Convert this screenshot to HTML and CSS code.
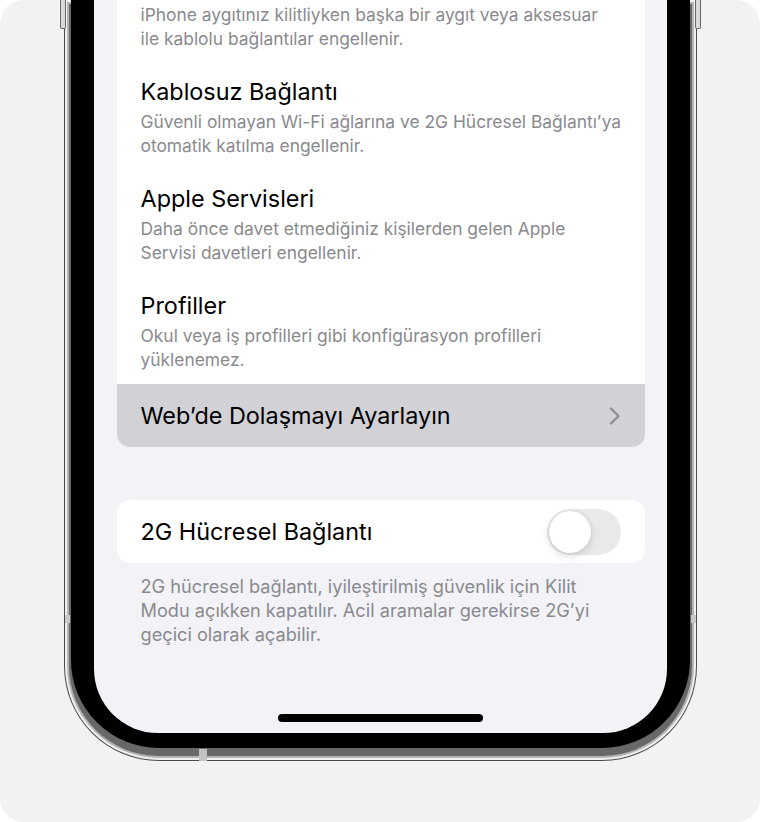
FILE: index.html
```html
<!DOCTYPE html>
<html lang="tr">
<head>
<meta charset="utf-8">
<title>Kilit Modu</title>
<link rel="stylesheet" href="styles.css">
</head>
<body>
<div class="stage">
  <div class="bezel">
    <span class="btn btn-left"></span>
    <span class="btn btn-right"></span>
    <span class="band band-left"></span>
    <span class="band band-right"></span>
    <span class="band-bottom"></span>
    <div class="screen">
      <div class="group">
        <div class="item">
          <div class="desc">iPhone aygıtınız kilitliyken başka bir aygıt veya aksesuar<br>ile kablolu bağlantılar engellenir.</div>
        </div>
        <div class="item">
          <div class="title">Kablosuz Bağlantı</div>
          <div class="desc">Güvenli olmayan Wi-Fi ağlarına ve 2G Hücresel Bağlantı’ya<br>otomatik katılma engellenir.</div>
        </div>
        <div class="item">
          <div class="title">Apple Servisleri</div>
          <div class="desc">Daha önce davet etmediğiniz kişilerden gelen Apple<br>Servisi davetleri engellenir.</div>
        </div>
        <div class="item item-last">
          <div class="title">Profiller</div>
          <div class="desc">Okul veya iş profilleri gibi konfigürasyon profilleri<br>yüklenemez.</div>
        </div>
        <div class="row row-active">
          <span class="title">Web’de Dolaşmayı Ayarlayın</span>
          <svg class="chevron" width="12" height="18" viewBox="0 0 12 18" aria-hidden="true">
            <path d="M2 1.5 L9.5 9 L2 16.5" fill="none" stroke="#8e8e93" stroke-width="2.4" stroke-linecap="round" stroke-linejoin="round"/>
          </svg>
        </div>
      </div>

      <div class="group group-single">
        <div class="row">
          <span class="title">2G Hücresel Bağlantı</span>
          <span class="toggle"><span class="knob"></span></span>
        </div>
      </div>

      <div class="footer">2G hücresel bağlantı, iyileştirilmiş güvenlik için Kilit<br>Modu açıkken kapatılır. Acil aramalar gerekirse 2G’yi<br>geçici olarak açabilir.</div>

      <div class="home"></div>
    </div>
  </div>
</div>
</body>
</html>
```

FILE: styles.css
```css
html, body {
  margin: 0;
  padding: 0;
  background: #ffffff;
}

.stage {
  width: 760px;
  height: 822px;
  background: #f2f2f2;
  border-radius: 24px;
  overflow: hidden;
  display: flex;
  flex-direction: column;
  align-items: center;
  font-family: Inter, "Noto Sans", "Liberation Sans", sans-serif;
  -webkit-font-smoothing: antialiased;
}

.bezel {
  position: relative;
  width: 619px;
  box-sizing: border-box;
  background: #000;
  padding: 0 23px 15px 23px;
  border-radius: 0 0 88px 88px;
  box-shadow:
    0 6px 0 2px #68686a,
    0 6px 0 4px #b4b4b6,
    0 6px 0 6px #f1f1f1,
    0 6px 0 7px #4a4a4a;
}

.btn {
  position: absolute;
  top: 0;
  width: 4px;
  height: 28px;
  background: #d9d9d9;
  border: 1px solid #6a6a6a;
  border-top: none;
  border-radius: 0 0 2px 2px;
}
.btn-left { left: -11px; }
.btn-right { right: -11px; }

.band {
  position: absolute;
  top: 615px;
  width: 5px;
  height: 8px;
  background: #c9c9cb;
}
.band-left { left: -6px; }
.band-right { right: -6px; }

.band-bottom {
  position: absolute;
  left: 128px;
  bottom: -13px;
  width: 8px;
  height: 12px;
  background: #c3c3c5;
}

.screen {
  height: 733px;
  box-sizing: border-box;
  background: #f2f2f7;
  border-radius: 0 0 64px 64px;
  padding: 0 22px 0 23px;
  display: flex;
  flex-direction: column;
  overflow: hidden;
}

.group {
  background: #ffffff;
  border-radius: 0 0 13px 13px;
  overflow: hidden;
}

.group-single {
  margin-top: 53px;
  border-radius: 13px;
}

.item {
  padding: 0 24px;
  margin-bottom: 26px;
}
.item-last {
  margin-bottom: 12px;
}

.title {
  font-size: 23.4px;
  line-height: 30px;
  color: #000;
  white-space: nowrap;
}

.desc {
  font-size: 17.4px;
  line-height: 24px;
  color: #8a8a8e;
  margin-top: 3px;
  white-space: nowrap;
}

.row {
  height: 63px;
  display: flex;
  align-items: center;
  justify-content: space-between;
  padding: 0 24px;
}

.row-active {
  background: #d1d1d6;
}

.chevron {
  display: block;
}

.toggle {
  width: 74px;
  height: 46px;
  border-radius: 23px;
  background: #e9e9eb;
  display: flex;
  align-items: center;
  padding: 0 2px;
  box-sizing: border-box;
}

.knob {
  width: 42px;
  height: 42px;
  border-radius: 50%;
  background: #fff;
  box-shadow: 0 3px 8px rgba(0, 0, 0, 0.15), 0 0 0 0.5px rgba(0, 0, 0, 0.06);
}

.footer {
  margin-top: 11px;
  padding: 0 24px;
  font-size: 18.2px;
  line-height: 24px;
  color: #8a8a8e;
  white-space: nowrap;
}

.home {
  margin: auto auto 11px auto;
  width: 205px;
  height: 8px;
  border-radius: 4px;
  background: #000;
}
```
